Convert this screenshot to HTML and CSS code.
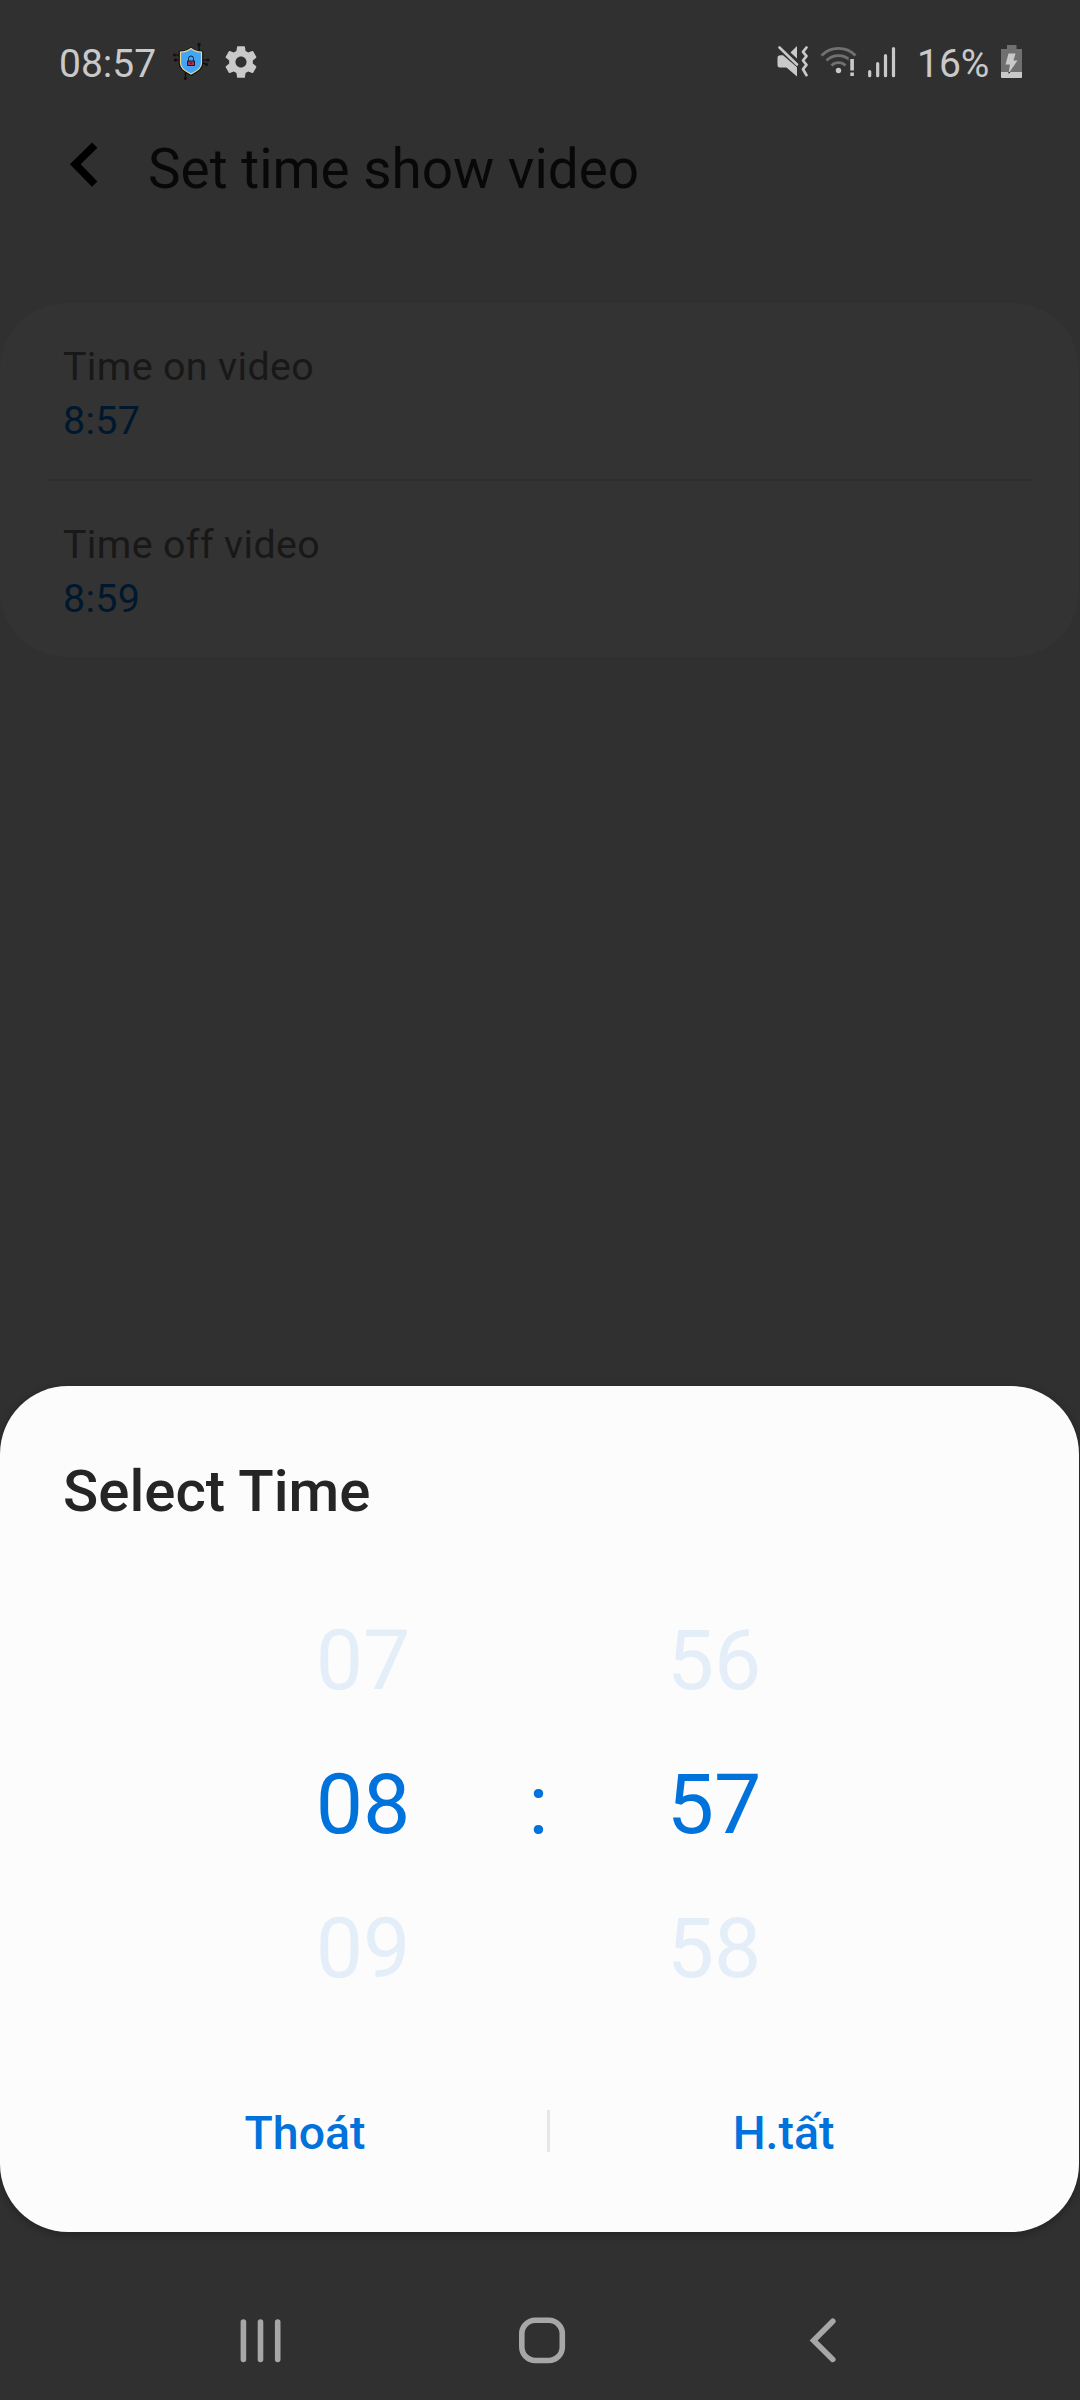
FILE: index.html
```html
<!DOCTYPE html>
<html lang="vi">
<head>
<meta charset="utf-8">
<title>Set time show video</title>
<link rel="stylesheet" href="styles.css">
</head>
<body>
<div class="screen">
  <header class="status">
    <span class="clock">08:57</span>
    <svg class="shield" width="40" height="40" viewBox="172 42 40 40">
      <g fill="none" stroke="#080808" stroke-width="1.2">
        <path d="M199 45v9M175 55h5v2M176 60h5M200 60h8M200 61l6 3.500M185.500 70v8"/>
      </g>
      <g fill="#080808" stroke="#351016" stroke-width=".7">
        <circle cx="199" cy="44.500" r="1.500"/><circle cx="174.500" cy="55" r="1.300"/><circle cx="175.500" cy="60" r="1.500"/>
        <circle cx="208" cy="60" r="1.300"/><circle cx="206.500" cy="64.500" r="1.300"/><circle cx="185.300" cy="78.500" r="1.300"/>
      </g>
      <path d="M191 48.500c-3 2.500-7 3.500-11 3.500v11c0 6 6 8.500 11 11.500c5-3 11-5.500 11-11.500v-11c-4 0-8-1-11-3.500z" fill="#42a5f5" stroke="#111" stroke-width="2.600"/>
      <path d="M191 48.500c-3 2.500-7 3.500-10.500 3.500v11c0 6 5.500 8 10.500 11c5-3 10.500-5 10.500-11v-11c-4 0-7.500-1-10.500-3.500z" fill="#42a5f5" stroke="#eedb91" stroke-width="1.200"/>
      <path d="M188.500 61v-2.500a2.500 2.500 0 0 1 5 0v2.500" fill="none" stroke="#123" stroke-width="1"/>
      <path d="M187.500 61h7v4.500h-7z" fill="#a93452" stroke="#21141c"/>
      <path d="M190.500 62.500h1v1.500h-1z" fill="#21141c"/>
    </svg>
    <svg class="gear" width="38" height="38" viewBox="0 0 24 24">
      <path fill="#c9c9c9" d="M19.430 12.980c.04-.32.07-.64.07-.98s-.03-.66-.07-.98l2.110-1.650c.19-.15.24-.42.12-.64l-2-3.460c-.12-.22-.39-.3-.61-.22l-2.490 1c-.52-.4-1.080-.73-1.690-.98l-.38-2.650C14.460 2.180 14.250 2 14 2h-4c-.25 0-.46.18-.49.42l-.38 2.650c-.61.25-1.170.59-1.690.98l-2.490-1c-.23-.09-.49 0-.61.22l-2 3.460c-.13.22-.07.49.12.64l2.110 1.650c-.04.32-.07.65-.07.98s.03.66.07.98l-2.110 1.650c-.19.15-.24.42-.12.64l2 3.460c.12.22.39.3.61.22l2.490-1c.52.4 1.080.73 1.690.98l.38 2.650c.03.24.24.42.49.42h4c.25 0 .46-.18.49-.42l.38-2.650c.61-.25 1.170-.59 1.690-.98l2.490 1c.23.09.49 0 .61-.22l2-3.460c.12-.22.07-.49-.12-.64l-2.110-1.650zM12 15.500c-1.930 0-3.500-1.570-3.500-3.500s1.570-3.500 3.500-3.500 3.500 1.570 3.500 3.500-1.570 3.500-3.500 3.500z"/>
    </svg>
    <svg class="signals" width="124" height="40" viewBox="774 42 124 40">
      <g fill="#c9c9c9">
        <path d="M780.500 55.300h2.500l14 12V76.500l-10.500-9h-6.500q-2.500 0-2.500-2.500v-7.200q0-2.500 3-2.500z"/>
        <path d="M790.500 52.500l6.500-6.500v12.500z"/>
      </g>
      <path d="M779.500 47.500L797 64.500" stroke="#c9c9c9" stroke-width="2.600" stroke-linecap="round"/>
      <path d="M806.500 47.500l-3.500 4.300 3.500 4.300-3.500 4.400 3.500 4.400-3.500 4.300 3.500 6" fill="none" stroke="#c9c9c9" stroke-width="2.700" stroke-linecap="round" stroke-linejoin="round"/>
      <g fill="none" stroke="#707070" stroke-width="2.800">
        <path d="M821.500 55.500a24 24 0 0 1 34 0"/>
        <path d="M826.500 60.500a17 17 0 0 1 24 0"/>
        <path d="M831.500 65.500a10 10 0 0 1 14 0"/>
      </g>
      <path d="M852 58v17" stroke="#303030" stroke-width="7"/>
      <circle cx="838.500" cy="70.500" r="2.700" fill="#c9c9c9"/>
      <path d="M850.300 59h3.600v11.500h-3.600zM850.300 72.500h3.600v3.500h-3.600z" fill="#c9c9c9"/>
      <path d="M869.700 71.500v4.200M877.700 63.700v12M885.500 55.700v20M893.500 48.500v27.200" stroke="#c9c9c9" stroke-width="3.200" stroke-linecap="round"/>
    </svg>
    <span class="percent">16%</span>
    <svg class="battery" width="21" height="34" viewBox="1001 45 21 34">
      <path d="M1007 45h9.500v4h5.500v23h-21V49h6z" fill="#707070"/>
      <path d="M1001 72h21v5q0 1-1 1h-19q-1 0-1-1z" fill="#c9c9c9"/>
      <path d="M1008.500 53.500h7l-2 7h4l-9 13 1.500-9h-4.500z" fill="#c9c9c9"/>
      <path d="M1008.500 72h2l-2 2z" fill="#222"/>
    </svg>
  </header>

  <div class="appbar">
    <svg width="30" height="48" viewBox="69 140 30 48"><path d="M92 142.500l5.400 5.200-16.700 16.600 16.700 17.300-5.400 5.200L69.900 164.300z" fill="#000"/></svg>
    <h1>Set time show video</h1>
  </div>

  <main class="card">
    <section class="row"><div class="label">Time on video</div><div class="value">8:57</div></section>
    <hr>
    <section class="row"><div class="label">Time off video</div><div class="value">8:59</div></section>
  </main>

  <section class="dialog">
    <h2>Select Time</h2>
    <div class="picker">
      <div class="wheel"><span>07</span><span class="current">08</span><span>09</span></div>
      <div class="colon">:</div>
      <div class="wheel"><span>56</span><span class="current">57</span><span>58</span></div>
    </div>
    <div class="actions">
      <button>Thoát</button><i class="bar"></i><button class="done">H.tất</button>
    </div>
  </section>

  <nav class="nav">
    <svg width="44" height="48" viewBox="239 2316 44 48"><path d="M243.400 2322v37.500M260.500 2322v37.500M277.700 2322v37.500"/></svg>
    <svg width="48" height="48" viewBox="517.500 2316 48 48"><rect x="521.300" y="2320.300" width="40.500" height="40.200" rx="13.500"/></svg>
    <svg width="30" height="48" viewBox="808 2316 30 48"><path d="M832.800 2321.300l-19.200 19.200 19.200 18.900"/></svg>
  </nav>
</div>
</body>
</html>
```
FILE: styles.css
```css
* { box-sizing: border-box; }
body { margin: 0; background: #303030; font-family: Roboto, sans-serif; }
svg { display: block; flex: none; }
.screen { width: 1080px; height: 2400px; display: flex; flex-direction: column; overflow: hidden; }

.status { display: flex; height: 124px; padding-left: 59px; align-items: flex-start; color: #c9c9c9; font-size: 39px; line-height: 46px; flex: none; }
.clock { width: 113px; margin-top: 41px; }
.shield { margin-top: 42px; }
.gear { margin: 42.500px 0 0 10px; }
.signals { margin: 42px 0 0 514px; }
.percent { width: 84px; margin: 41px 0 0 19px; white-space: nowrap; }
.battery { margin-top: 45px; }

.appbar { display: flex; height: 179px; padding: 16px 0 0 69px; flex: none; }
.appbar h1 { margin: -3px 0 0 49px; font-size: 54.850px; line-height: 64px; height: 64px; font-weight: 400; color: #080808; white-space: nowrap; }

.card { width: 1079px; height: 354px; border-radius: 66px; background: #333; flex: none; }
.row { height: 176px; padding: 37px 63px 0; font-size: 39.400px; line-height: 54px; }
.label { color: #181818; letter-spacing: .35px; }
.value { color: #00182d; letter-spacing: .3px; }
.card hr { margin: 0 46px 0 47px; height: 2px; border: 0; background: #2e2e2e; }

.dialog { width: 1079px; height: 846px; margin-top: 729px; padding-top: 71px; border-radius: 68px; background: #fcfcfc; box-shadow: 0 2px 8px rgba(0, 0, 0, .3); flex: none; }
.dialog h2 { margin: 0 0 0 63px; font-size: 58.200px; line-height: 68px; height: 68px; font-weight: 500; color: #252525; }
.picker { display: flex; height: 432px; margin: 64px 0 0 290.500px; color: #0072de; font-size: 84.200px; }
.wheel { width: 145px; display: flex; flex-direction: column; text-align: center; }
.wheel span { height: 144px; line-height: 144px; color: #e4eef8; }
.wheel .current { color: #0072dc; }
.colon { width: 206px; height: 144px; margin-top: 145px; line-height: 144px; text-align: center; }
.actions { display: flex; margin: 72px 0 0 67px; align-items: center; height: 80px; }
.actions button { width: 476px; padding: 0; border: 0; background: none; color: #0072dc; font: 500 46.400px/60px Roboto, sans-serif; }
.actions .done { width: 459px; }
.actions .bar { width: 3px; height: 42px; margin: 0 4px 4px; background: #e6e6e6; }

.nav { display: flex; margin-top: 84px; padding-left: 239px; flex: none; }
.nav svg { fill: none; stroke: #a7a7a7; stroke-width: 5.600px; stroke-linecap: round; }
.nav svg:nth-child(2) { margin-left: 234.500px; }
.nav svg:nth-child(3) { margin-left: 242.500px; }
```
